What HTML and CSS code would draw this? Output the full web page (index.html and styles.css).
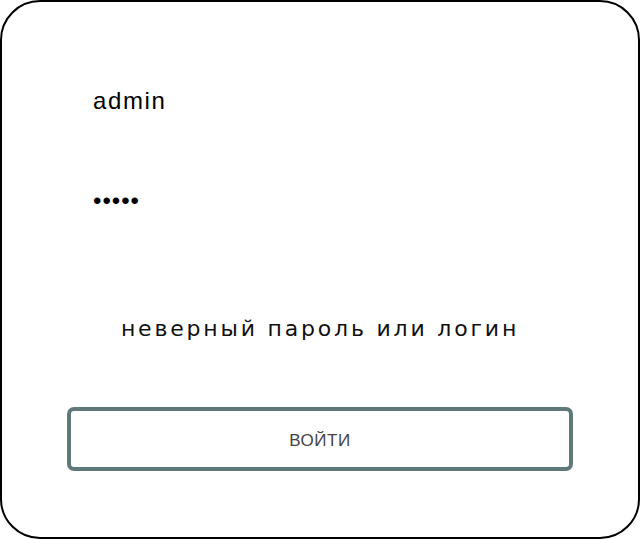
FILE: index.html
```html
<!DOCTYPE html>
<html lang="ru">
<head>
<meta charset="utf-8">
<title>Вход</title>
<link rel="stylesheet" href="styles.css">
</head>
<body>
<div class="card">
  <div class="field">admin</div>
  <div class="field pass">•••••</div>
  <div class="error">неверный пароль или логин</div>
  <div class="btn">ВОЙТИ</div>
</div>
</body>
</html>
```
FILE: styles.css
```css
html, body {
  margin: 0;
  padding: 0;
  background: #fff;
}
.card {
  box-sizing: border-box;
  width: 640px;
  height: 539px;
  border: 2px solid #000;
  border-radius: 40px;
  padding: 84px 65px 0 65px;
  display: flex;
  flex-direction: column;
  font-family: "Liberation Sans", Arial, sans-serif;
}
.field {
  font-size: 24px;
  letter-spacing: 1.6px;
  line-height: 30px;
  color: #000;
  padding-left: 26px;
  height: 30px;
}
.pass {
  margin-top: 70px;
  letter-spacing: 1px;
}
.error {
  margin-top: 100px;
  text-align: center;
  font-family: "DejaVu Sans", sans-serif;
  font-size: 22px;
  letter-spacing: 2.8px;
  color: #111;
  line-height: 26px;
}
.btn {
  margin-top: 65px;
  box-sizing: border-box;
  height: 64px;
  border: 4px solid #5f7878;
  border-radius: 7px;
  display: flex;
  align-items: center;
  justify-content: center;
  padding-top: 4px;
  font-size: 17px;
  letter-spacing: 0.5px;
  color: #444;
}
```
